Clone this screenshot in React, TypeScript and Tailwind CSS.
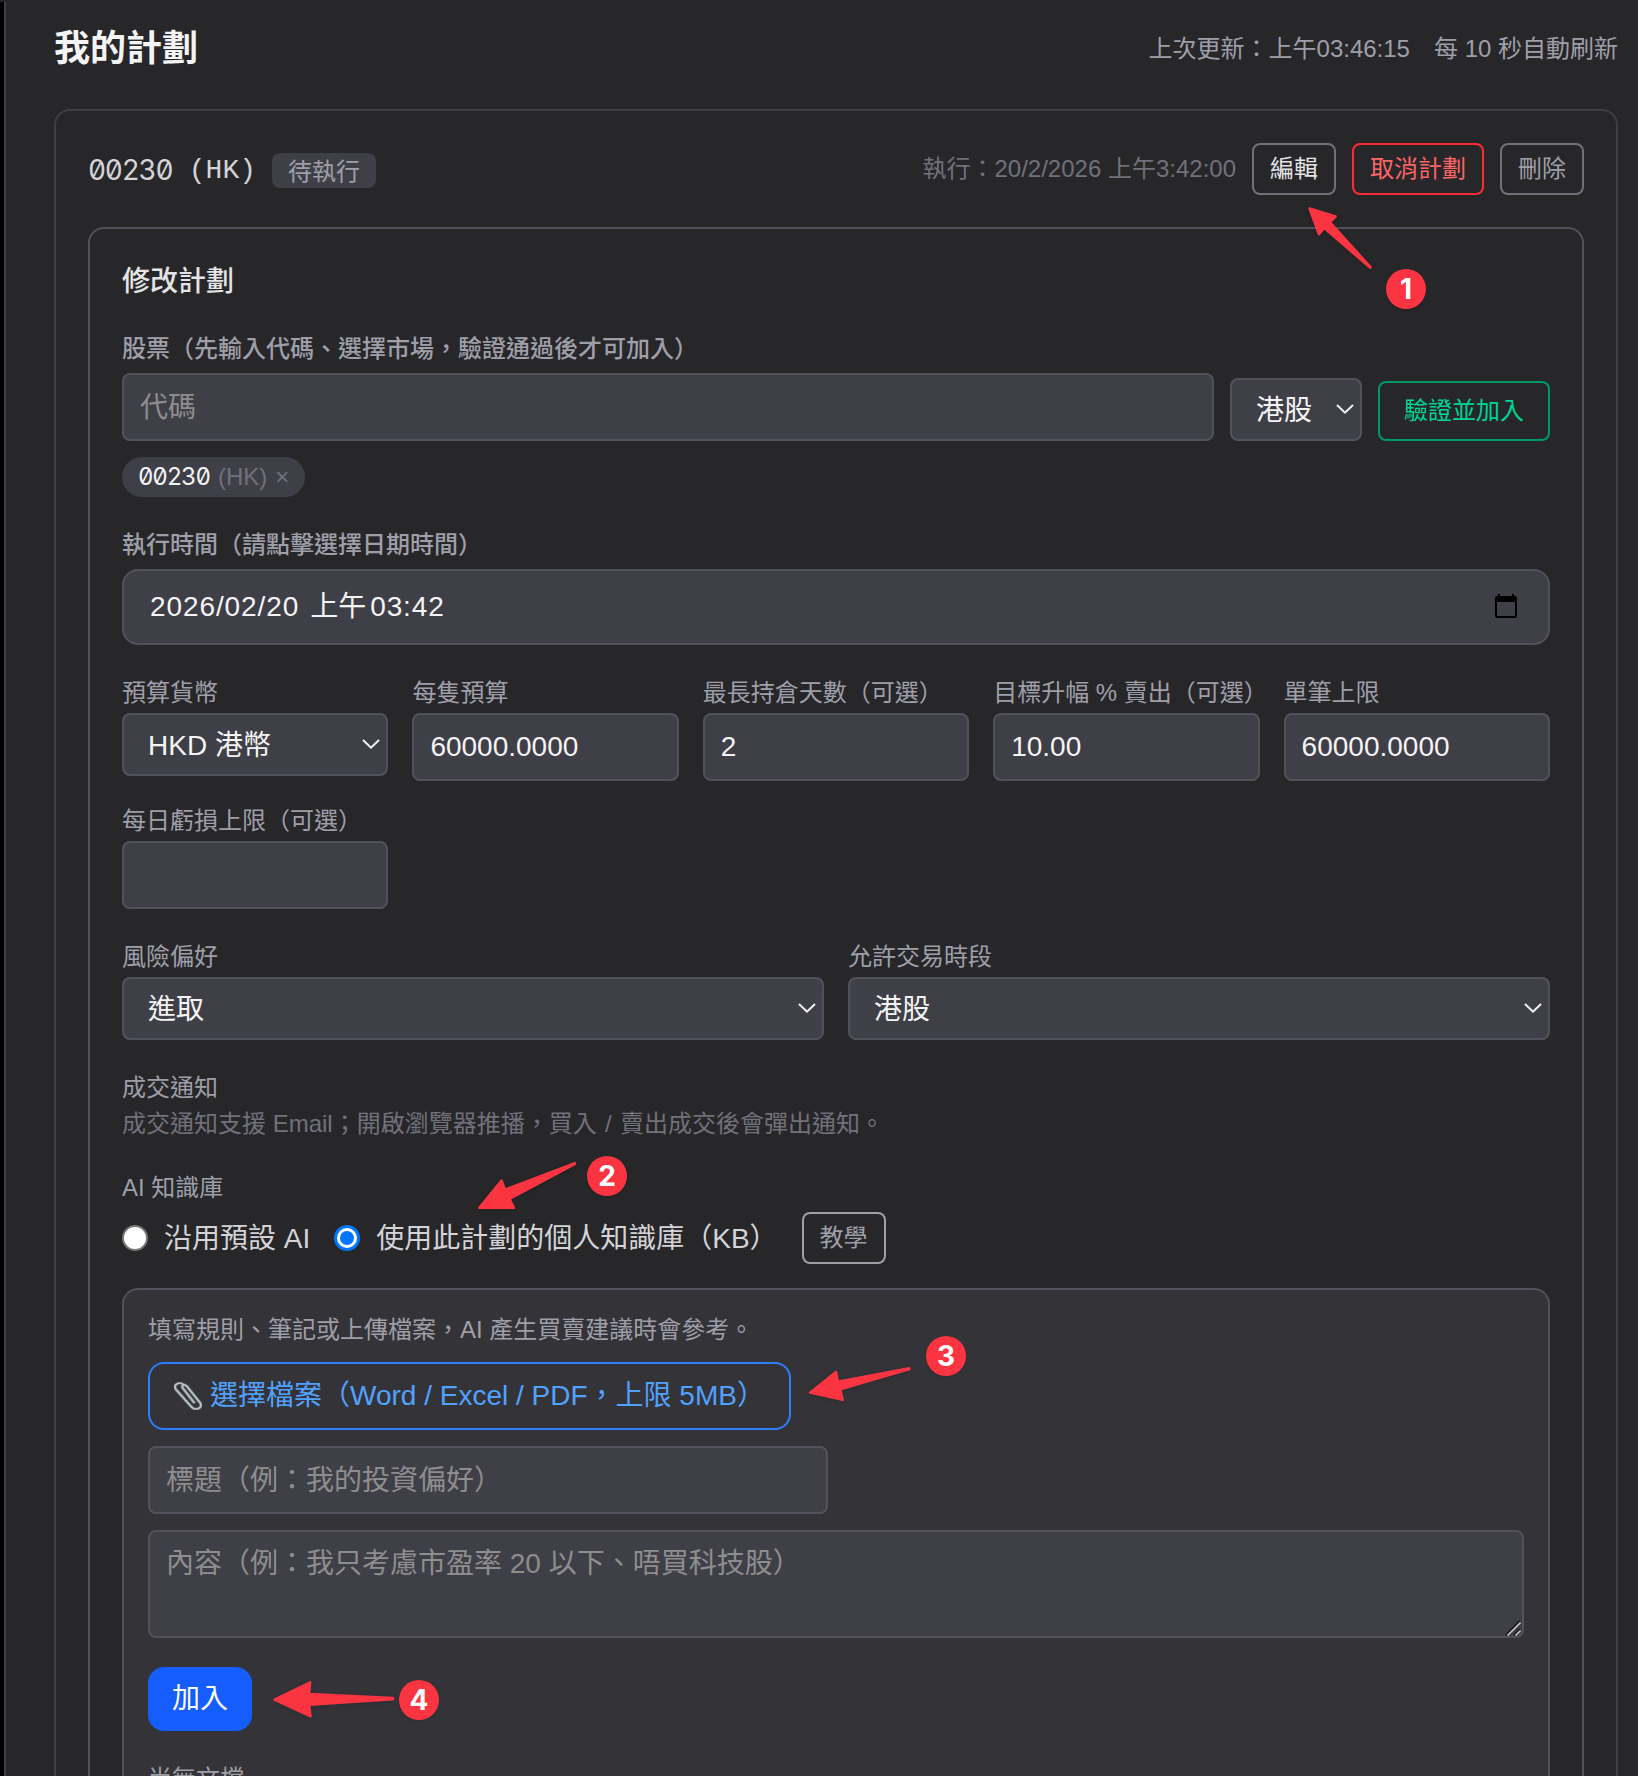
import type { ReactNode } from "react";

const budgetFields = [
  { label: "每隻預算", value: "60000.0000" },
  { label: "最長持倉天數（可選）", value: "2" },
  { label: "目標升幅 % 賣出（可選）", value: "10.00" },
  { label: "單筆上限", value: "60000.0000" },
  { label: "每日虧損上限（可選）", value: "" },
];

const steps = [
  { n: 1, pos: "left-[1386px] top-[269px]" },
  { n: 2, pos: "left-[587px] top-[1156px]" },
  { n: 3, pos: "left-[926px] top-[1336px]" },
  { n: 4, pos: "left-[399px] top-[1680px]" },
];

const arrows = [
  "M1309.5 208.5 L1335.7 216.5 L1330 222.3 L1370.7 267.3 L1370 267.7 L1324.3 228 L1319 234.3 Z",
  "M479.3 1207.7 L501.5 1180.5 L505 1189.5 L574.7 1163 L575 1164 L509.5 1199 L514 1207.9 Z",
  "M810 1392.7 L836 1371.9 L838 1381.8 L909.3 1368.3 L909.5 1369 L840.3 1389.3 L842.7 1399.9 Z",
  "M274.5 1699.7 L310.2 1682.3 L309.2 1694 L392.9 1698 L392.9 1699.3 L309.2 1704.7 L310.5 1716.3 Z",
];

const clipPath =
  "M18.5 20.5L9.6 6.6c-1.7-2.6 1.6-4.4 3.2-2l10.6 16.2c3.2 5-3.8 8.8-7 4L4.2 8C1 3 7.2-.6 10.4 3.4";

function PaperClip() {
  return (
    <svg
      className="mr-2 h-7 w-7 shrink-0"
      viewBox="2.5 0.5 22.5 27.5"
      preserveAspectRatio="none"
      fill="none"
      strokeLinecap="round"
    >
      <path d={clipPath} stroke="#6b747a" strokeWidth={2.8} />
      <path d={clipPath} stroke="#bcc2c5" strokeWidth={1.5} />
    </svg>
  );
}

function Chevron() {
  return (
    <svg className="mb-px w-[18px] h-[10px] shrink-0" viewBox="0 0 18 10" fill="none" stroke="#f4f4f5" strokeWidth={2}>
      <path d="M1 1l8 7.6L17 1" />
    </svg>
  );
}

function Select({ children }: { children: ReactNode }) {
  return (
    <div className="h-[63px] flex items-center justify-between rounded-lg border-2 border-zinc-600 bg-zinc-700 pl-6 pr-1.5 text-[28px] leading-10 text-zinc-100">
      <span className="pt-0.5">{children}</span>
      <Chevron />
    </div>
  );
}

function Input({ children }: { children?: ReactNode }) {
  return (
    <div className="h-[68px] flex items-center rounded-lg border-2 border-zinc-600 bg-zinc-700 px-4 text-[28px] leading-10 text-zinc-100">
      {children}
    </div>
  );
}

function Label({ children }: { children: ReactNode }) {
  return <div className="mb-1 text-2xl leading-8 text-zinc-400 whitespace-nowrap">{children}</div>;
}

export default function App() {
  return (
    <div className="relative h-[1776px] w-[1638px] overflow-hidden bg-zinc-800 flex font-['Liberation_Sans','Noto_Sans_CJK_TC',sans-serif]">
      <div className="mt-0.5 w-1.5 shrink-0 border-r-2 border-zinc-700 bg-black" />

      <main className="ml-12 mr-5 flex-1 min-w-0">
        <header className="flex h-[109px] items-start justify-between pt-[25px]">
          <h1 className="text-4xl leading-12 font-bold text-zinc-100">我的計劃</h1>
          <div className="flex gap-6 text-2xl leading-12 text-zinc-400">
            <span>上次更新：上午03:46:15</span>
            <span>每 10 秒自動刷新</span>
          </div>
        </header>

        <section className="h-[1800px] rounded-2xl border-2 border-zinc-700 p-8">
          <div className="flex h-[52px] items-center justify-between">
            <div className="flex items-center gap-4 pt-[3px]">
              <span className="flex w-[168px] whitespace-pre text-[28px] leading-10 text-zinc-300">
                <span className="w-[84px] tracking-[-1.3px] font-['Inter',sans-serif] [font-feature-settings:'tnum','zero']">
                  00230
                </span>
                <span className="pt-px font-['Liberation_Mono',monospace]"> (HK)</span>
              </span>
              <span className="flex h-[35px] items-center rounded-lg bg-zinc-700 px-4 pt-0.5 text-2xl text-zinc-400">
                待執行
              </span>
            </div>
            <div className="flex items-center gap-4 text-2xl">
              <span className="text-zinc-500">執行：20/2/2026 上午3:42:00</span>
              <button className="h-[52px] rounded-lg border-2 border-zinc-500 px-4 text-zinc-200">編輯</button>
              <button className="h-[52px] rounded-lg border-2 border-[#fb2c36] px-4 text-[#ff6467]">取消計劃</button>
              <button className="h-[52px] rounded-lg border-2 border-zinc-500 px-4 text-zinc-400">刪除</button>
            </div>
          </div>

          <div className="mt-8 h-[1700px] rounded-2xl border-2 border-zinc-600 p-8">
            <h2 className="mb-[31px] pt-px text-[28px] leading-10 font-medium text-zinc-200">修改計劃</h2>

            {/* Stocks */}
            <div className="mb-2 text-2xl leading-8 font-medium text-zinc-400">
              股票（先輸入代碼、選擇市場，驗證通過後才可加入）
            </div>
            <div className="flex items-end gap-4">
              <div className="flex-1">
                <Input>
                  <span className="pt-px text-[#8e8e8e]">代碼</span>
                </Input>
              </div>
              <div className="w-[132px]">
                <Select>港股</Select>
              </div>
              <button className="h-[60px] rounded-lg border-2 border-[#009966] px-6 text-2xl text-[#00d492]">
                驗證並加入
              </button>
            </div>
            <div className="mt-4 flex">
              <span className="flex h-10 items-center gap-2 rounded-full bg-zinc-700 px-4 text-2xl text-zinc-500">
                <span className="w-[72px] tracking-[-1.2px] text-zinc-100 font-['Inter',sans-serif] [font-feature-settings:'tnum','zero']">
                  00230
                </span>
                <span>(HK)</span>
                <span>×</span>
              </span>
            </div>

            {/* Run time */}
            <div className="mt-8 mb-2 text-2xl leading-8 font-medium text-zinc-400">
              執行時間（請點擊選擇日期時間）
            </div>
            <div className="flex h-[76px] items-center justify-between rounded-2xl border-2 border-zinc-600 bg-zinc-700 pl-[26px] pr-[30px] text-[28px] text-zinc-100">
              <div className="flex">
                <span className="tracking-[0.9px]">2026/02/20</span>
                <span className="ml-[11px]">上午</span>
                <span className="ml-1 tracking-[0.9px]">03:42</span>
              </div>
              <svg className="mb-0.5 h-6 w-6" viewBox="0 0 24 24" fill="#000">
                <path d="M21 2h-1V0h-2v2H6V0H4v2H3a2 2 0 0 0-2 2v18a2 2 0 0 0 2 2h18a2 2 0 0 0 2-2V4a2 2 0 0 0-2-2zm0 20H3V8h18z" />
              </svg>
            </div>

            {/* Budget */}
            <div className="mt-8 grid grid-cols-5 gap-6">
              <div>
                <Label>預算貨幣</Label>
                <Select>HKD 港幣</Select>
              </div>
              {budgetFields.map((field) => (
                <div key={field.label}>
                  <Label>{field.label}</Label>
                  <Input>{field.value}</Input>
                </div>
              ))}
            </div>

            <div className="mt-8 grid grid-cols-2 gap-6">
              <div>
                <Label>風險偏好</Label>
                <Select>進取</Select>
              </div>
              <div>
                <Label>允許交易時段</Label>
                <Select>港股</Select>
              </div>
            </div>

            {/* Notifications */}
            <div className="mt-8 text-2xl leading-8">
              <p className="mb-1 text-zinc-400">成交通知</p>
              <p className="text-zinc-500">
                成交通知支援 Email；開啟瀏覽器推播，買入 <span className="px-[1.7px]">/</span> 賣出成交後會彈出通知。
              </p>
            </div>

            {/* Knowledge base */}
            <p className="mt-8 mb-2 text-2xl leading-8 text-zinc-400">AI 知識庫</p>
            <div className="flex h-[52px] items-center gap-6 text-[28px] text-zinc-300">
              <label className="flex items-center gap-4">
                <span className="h-[26px] w-[26px] rounded-full border-2 border-[#767676] bg-white" />
                <span className="pt-px">沿用預設 AI</span>
              </label>
              <label className="flex items-center gap-4">
                <span className="flex h-[26px] w-[26px] items-center justify-center rounded-full border-[3px] border-[#0075ff] bg-white">
                  <span className="h-3.5 w-3.5 rounded-full bg-[#0075ff]" />
                </span>
                <span className="pt-px">使用此計劃的個人知識庫（KB）</span>
              </label>
              <button className="h-[52px] rounded-lg border-2 border-zinc-400 px-4 text-2xl text-zinc-400">教學</button>
            </div>

            <div className="mt-6 h-[600px] rounded-2xl border-2 border-zinc-600 bg-[#343338] p-6">
              <p className="text-2xl leading-8 text-zinc-400">填寫規則、筆記或上傳檔案，AI 產生買賣建議時會參考。</p>
              <div className="mt-4 flex h-[68px] w-[643px] items-center rounded-2xl border-2 border-[#2b7fff] pl-6 text-[28px] text-[#51a2ff]">
                <PaperClip />
                選擇檔案（Word / Excel / PDF，上限 5MB）
              </div>
              <div className="mt-4 w-[680px]">
                <Input>
                  <span className="pt-px text-[#8e8e8e]">標題（例：我的投資偏好）</span>
                </Input>
              </div>
              <div className="mt-4 flex h-[108px] items-end justify-between rounded-lg border-2 border-zinc-600 bg-zinc-700 pl-4 text-[28px] text-[#8e8e8e]">
                <span className="self-start pt-3 leading-10">內容（例：我只考慮市盈率 20 以下、唔買科技股）</span>
                <svg className="mr-px h-4 w-4" viewBox="0 0 16 16" fill="none">
                  <path d="M1 15L15 1M9 15l6-6" stroke="#1a1a1c" strokeWidth={2} />
                  <path d="M2.5 15.5L15.5 2.5M10.5 15.5l5-5" stroke="#c4c4c4" strokeWidth={1.6} />
                </svg>
              </div>
              <button className="mt-[29px] block h-16 rounded-2xl bg-[#155dfc] px-6 text-[28px] text-white">加入</button>
              <p className="mt-8 text-2xl leading-8 text-zinc-400">尚無文檔</p>
            </div>
          </div>
        </section>
      </main>

      {/* Walkthrough markers */}
      <svg className="absolute inset-0 h-[1776px] w-[1638px] drop-shadow-sm" viewBox="0 0 1638 1776">
        {arrows.map((d) => (
          <path key={d} d={d} fill="#fa3541" stroke="#fa3541" strokeWidth={2.4} strokeLinejoin="round" />
        ))}
      </svg>
      {steps.map((step) => (
        <span
          key={step.n}
          className={`absolute flex h-10 w-10 items-center justify-center rounded-full bg-[#fa3541] pb-px text-[28px] font-bold text-white shadow-sm font-['Inter',sans-serif] ${step.pos}`}
        >
          {step.n}
        </span>
      ))}
    </div>
  );
}
